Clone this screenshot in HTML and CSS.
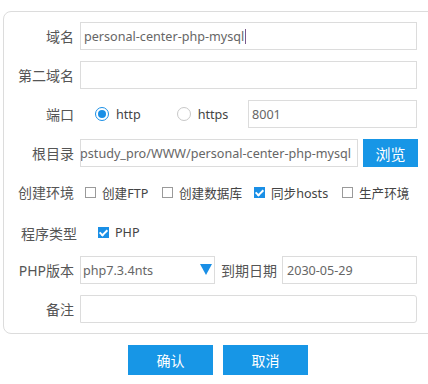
FILE: index.html
```html
<!DOCTYPE html>
<html lang="zh-CN">
<head>
    <meta charset="UTF-8">
    <meta name="viewport" content="width=device-width, initial-scale=1.0">
    <title>站点设置</title>
    <link rel="stylesheet" href="styles.css">
</head>
<body>
    <main>
        <div class="site-card">
            <div class="row">
                <label class="row-label">域名</label>
                <div class="field field-focus">personal-center-php-mysql<span class="caret"></span></div>
            </div>
            <div class="row">
                <label class="row-label">第二域名</label>
                <div class="field"></div>
            </div>
            <div class="row">
                <label class="row-label">端口</label>
                <div class="port-opts">
                    <span class="opt"><span class="radio radio-on"></span>http</span>
                    <span class="opt opt-https"><span class="radio"></span>https</span>
                </div>
                <div class="field field-port">8001</div>
            </div>
            <div class="row">
                <label class="row-label">根目录</label>
                <div class="field field-path"><span>hpstudy_pro/WWW/personal-center-php-mysql</span></div>
                <button class="btn btn-browse">浏览</button>
            </div>
            <div class="row">
                <label class="row-label">创建环境</label>
                <div class="checks">
                    <span class="chk chk-ftp"><span class="box"></span>创建FTP</span>
                    <span class="chk chk-db"><span class="box"></span>创建数据库</span>
                    <span class="chk chk-hosts"><span class="box box-on"></span>同步hosts</span>
                    <span class="chk"><span class="box"></span>生产环境</span>
                </div>
            </div>
            <div class="row">
                <label class="row-label row-label-type">程序类型</label>
                <div class="checks checks-type">
                    <span class="chk"><span class="box box-on"></span>PHP</span>
                </div>
            </div>
            <div class="row">
                <label class="row-label">PHP版本</label>
                <div class="field field-select">
                    php7.3.4nts
                    <svg class="arrow" width="12" height="11" viewBox="0 0 12 11"><path d="M0 0H12L6 11Z" fill="#1a8fe6"/></svg>
                </div>
                <span class="date-label">到期日期</span>
                <div class="field field-date">2030-05-29</div>
            </div>
            <div class="row">
                <label class="row-label">备注</label>
                <div class="field field-note"></div>
            </div>
        </div>

        <div class="actions">
            <button class="btn btn-main">确认</button>
            <button class="btn btn-main">取消</button>
        </div>
    </main>
</body>
</html>
```

FILE: styles.css
```css
*{
    box-sizing: border-box;
}
body{
    margin: 0;
    padding: 0;
    overflow: hidden;
    background: #fff;
    font-family: "Noto Sans", "Noto Sans CJK SC", sans-serif;
    color: #555;
}
main{
    width: 428px;
    height: 384px;
    padding-top: 11px;
    overflow: hidden;
}
.site-card{
    width: 460px;
    margin-left: 3px;
    border: 1px solid #dcdcdc;
    border-radius: 8px;
    padding: 10px 0;
    display: flex;
    flex-direction: column;
    gap: 11px;
}
.row{
    display: flex;
    align-items: center;
    height: 28px;
}
.row-label{
    width: 70px;
    flex: none;
    text-align: right;
    font-size: 14px;
    color: #555;
    margin-right: 6px;
}
.row-label-type{
    width: 73px;
    margin-right: 3px;
    padding-top: 3px;
}
.field{
    height: 28px;
    width: 337px;
    border: 1px solid #dcdcdc;
    display: flex;
    align-items: center;
    padding: 0 3px;
    font-size: 12.6px;
    color: #666;
    white-space: nowrap;
    overflow: hidden;
}
.caret{
    display: inline-block;
    width: 1px;
    height: 15px;
    margin-left: 1px;
    background: #7a5a8c;
}
.port-opts{
    display: flex;
    align-items: center;
    width: 168px;
    padding-left: 15px;
    font-size: 12.6px;
    color: #444;
}
.opt{
    display: flex;
    align-items: center;
    gap: 7px;
}
.opt-https{
    margin-left: 36px;
}
.radio{
    width: 14px;
    height: 14px;
    border: 1px solid #c8c8c8;
    border-radius: 50%;
    position: relative;
    flex: none;
}
.radio-on{
    border-color: #1a8fe6;
}
.radio-on::after{
    content: "";
    position: absolute;
    left: 2px;
    top: 2px;
    width: 8px;
    height: 8px;
    border-radius: 50%;
    background: #1a8fe6;
}
.field-port{
    width: 169px;
}
.field-path{
    width: 278px;
    justify-content: flex-end;
    padding-right: 6px;
}
.btn{
    border: none;
    background: #1796e6;
    color: #fff;
    font-family: "Noto Sans CJK SC", sans-serif;
    font-size: 14px;
    cursor: pointer;
}
.btn-browse{
    width: 55px;
    height: 28px;
    margin-left: 5px;
    font-size: 15px;
}
.checks{
    display: flex;
    align-items: center;
    padding-left: 5px;
    font-size: 12.6px;
    color: #444;
}
.checks-type{
    padding-left: 18px;
    padding-top: 2px;
}
.chk{
    display: flex;
    align-items: center;
    gap: 6px;
}
.chk-ftp{
    width: 77px;
}
.chk-db{
    width: 92px;
}
.chk-hosts{
    width: 88px;
}
.box{
    width: 11px;
    height: 11px;
    border: 1px solid #9a9a9a;
    flex: none;
    position: relative;
}
.box-on{
    border: none;
    background: #1a8fe6;
}
.box-on::after{
    content: "";
    position: absolute;
    left: 3px;
    top: 1px;
    width: 3px;
    height: 6px;
    border: solid #fff;
    border-width: 0 2px 2px 0;
    transform: rotate(45deg);
}
.field-select{
    width: 135px;
    padding-left: 2px;
    position: relative;
}
.arrow{
    position: absolute;
    right: 2px;
    top: 7px;
}
.date-label{
    font-size: 14px;
    color: #555;
    margin: 0 5px 0 6px;
}
.field-date{
    width: 135px;
    padding-left: 4px;
}
.field-note{
    border-radius: 0 3px 3px 0;
}
.actions{
    display: flex;
    gap: 10px;
    padding-left: 128px;
    margin-top: 11px;
}
.btn-main{
    width: 85px;
    height: 30px;
}
```
